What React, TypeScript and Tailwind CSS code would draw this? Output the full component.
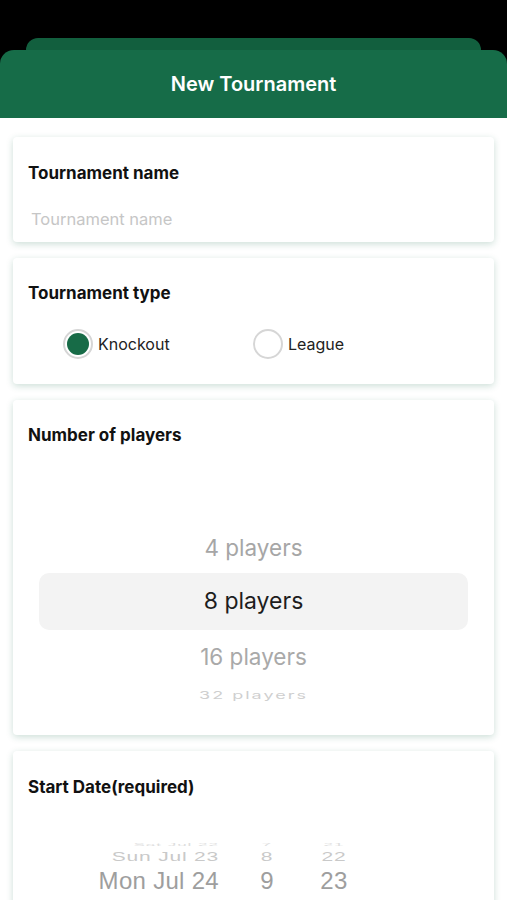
import { useState } from 'react';

const FONT = "font-['Inter','Liberation_Sans',sans-serif]";

type Kind = 'knockout' | 'league';

function Card({ className, children }: { className: string; children: React.ReactNode }) {
  return (
    <div
      className={`mx-[13px] rounded-[4px] bg-white shadow-[0_2px_7px_rgba(22,107,72,0.22)] ${className}`}
    >
      {children}
    </div>
  );
}

function Label({ children }: { children: React.ReactNode }) {
  return <div className="pl-[15px] text-[17px] font-bold leading-[20px] text-[#111]">{children}</div>;
}

function Radio({ checked, label, onClick }: { checked: boolean; label: string; onClick: () => void }) {
  return (
    <button onClick={onClick} className="flex items-center gap-[5px]">
      <span className="flex h-[30px] w-[30px] items-center justify-center rounded-full border-2 border-[#d6d6d6] bg-white">
        {checked && <span className="h-[22px] w-[22px] rounded-full bg-[#176b47]" />}
      </span>
      <span className="text-[16px] leading-[20px] text-[#222]">{label}</span>
    </button>
  );
}

export default function App() {
  const [kind, setKind] = useState<Kind>('knockout');
  const [name, setName] = useState('');

  return (
    <div className={`h-[900px] overflow-hidden bg-white ${FONT}`}>
      {/* Sheet header */}
      <div className="bg-black pt-[38px]">
        <div className="mx-[26px] h-[12px] rounded-t-[12px] bg-[#125f3e]" />
        <div className="flex h-[68px] items-center justify-center rounded-t-[14px] bg-[#166c48]">
          <h1 className="text-[20px] font-semibold text-white">New Tournament</h1>
        </div>
      </div>

      <div className="flex flex-col gap-[16px] pt-[19px]">
        {/* Tournament name */}
        <Card className="h-[105px] pt-[26px]">
          <Label>Tournament name</Label>
          <input
            value={name}
            onChange={(e) => setName(e.target.value)}
            placeholder="Tournament name"
            className="mt-[26px] ml-[18px] w-[440px] bg-transparent text-[16.5px] leading-[20px] text-[#222] outline-none placeholder:text-[#c6c6c6]"
          />
        </Card>

        {/* Tournament type */}
        <Card className="h-[126px] pt-[25px]">
          <Label>Tournament type</Label>
          <div className="mt-[26px] flex pl-[50px]">
            <div className="w-[190px]">
              <Radio checked={kind === 'knockout'} label="Knockout" onClick={() => setKind('knockout')} />
            </div>
            <Radio checked={kind === 'league'} label="League" onClick={() => setKind('league')} />
          </div>
        </Card>

        {/* Number of players */}
        <Card className="h-[335px] pt-[25px]">
          <Label>Number of players</Label>
          <div className="mt-[85px] flex flex-col items-center">
            <div className="flex h-[36px] items-center text-[22.5px] text-[#a6a6a6]">4 players</div>
            <div className="mt-[7px] flex h-[57px] w-[429px] items-center justify-center rounded-[10px] bg-[#f3f3f3] text-[23px] text-[#1d1d1d]">
              8 players
            </div>
            <div className="mt-[9px] flex h-[36px] items-center text-[22.5px] text-[#a9a9a9]">16 players</div>
            <div className="mt-[8px] flex h-[24px] scale-y-[0.6] items-center text-[18px] tracking-[2px] text-[#cfcfcf]">
              32 players
            </div>
          </div>
        </Card>

        {/* Start date */}
        <Card className="h-[200px] pt-[26px]">
          <Label>Start Date(required)</Label>
          <div className="mt-[45px] flex flex-col font-['Liberation_Sans',sans-serif]">
            <div className="flex h-[6px] items-center text-[17px] leading-[6px] tracking-[1px] text-[#dedede]">
              <span className="w-[206px] scale-y-[0.22] text-right">Sat Jul 22</span>
              <span className="w-[96px] scale-y-[0.22] text-center">7</span>
              <span className="w-[38px] scale-y-[0.22] text-center">21</span>
            </div>
            <div className="flex h-[18px] items-center text-[21px] tracking-[0.8px] text-[#c9c9c9]">
              <span className="w-[206px] scale-y-[0.65] text-right">Sun Jul 23</span>
              <span className="w-[96px] scale-y-[0.65] text-center">8</span>
              <span className="w-[38px] scale-y-[0.65] text-center">22</span>
            </div>
            <div className="flex h-[30px] items-center text-[24px] tracking-[0.3px] text-[#9e9e9e]">
              <span className="w-[206px] text-right">Mon Jul 24</span>
              <span className="w-[96px] text-center">9</span>
              <span className="w-[38px] text-center">23</span>
            </div>
          </div>
        </Card>
      </div>
    </div>
  );
}
